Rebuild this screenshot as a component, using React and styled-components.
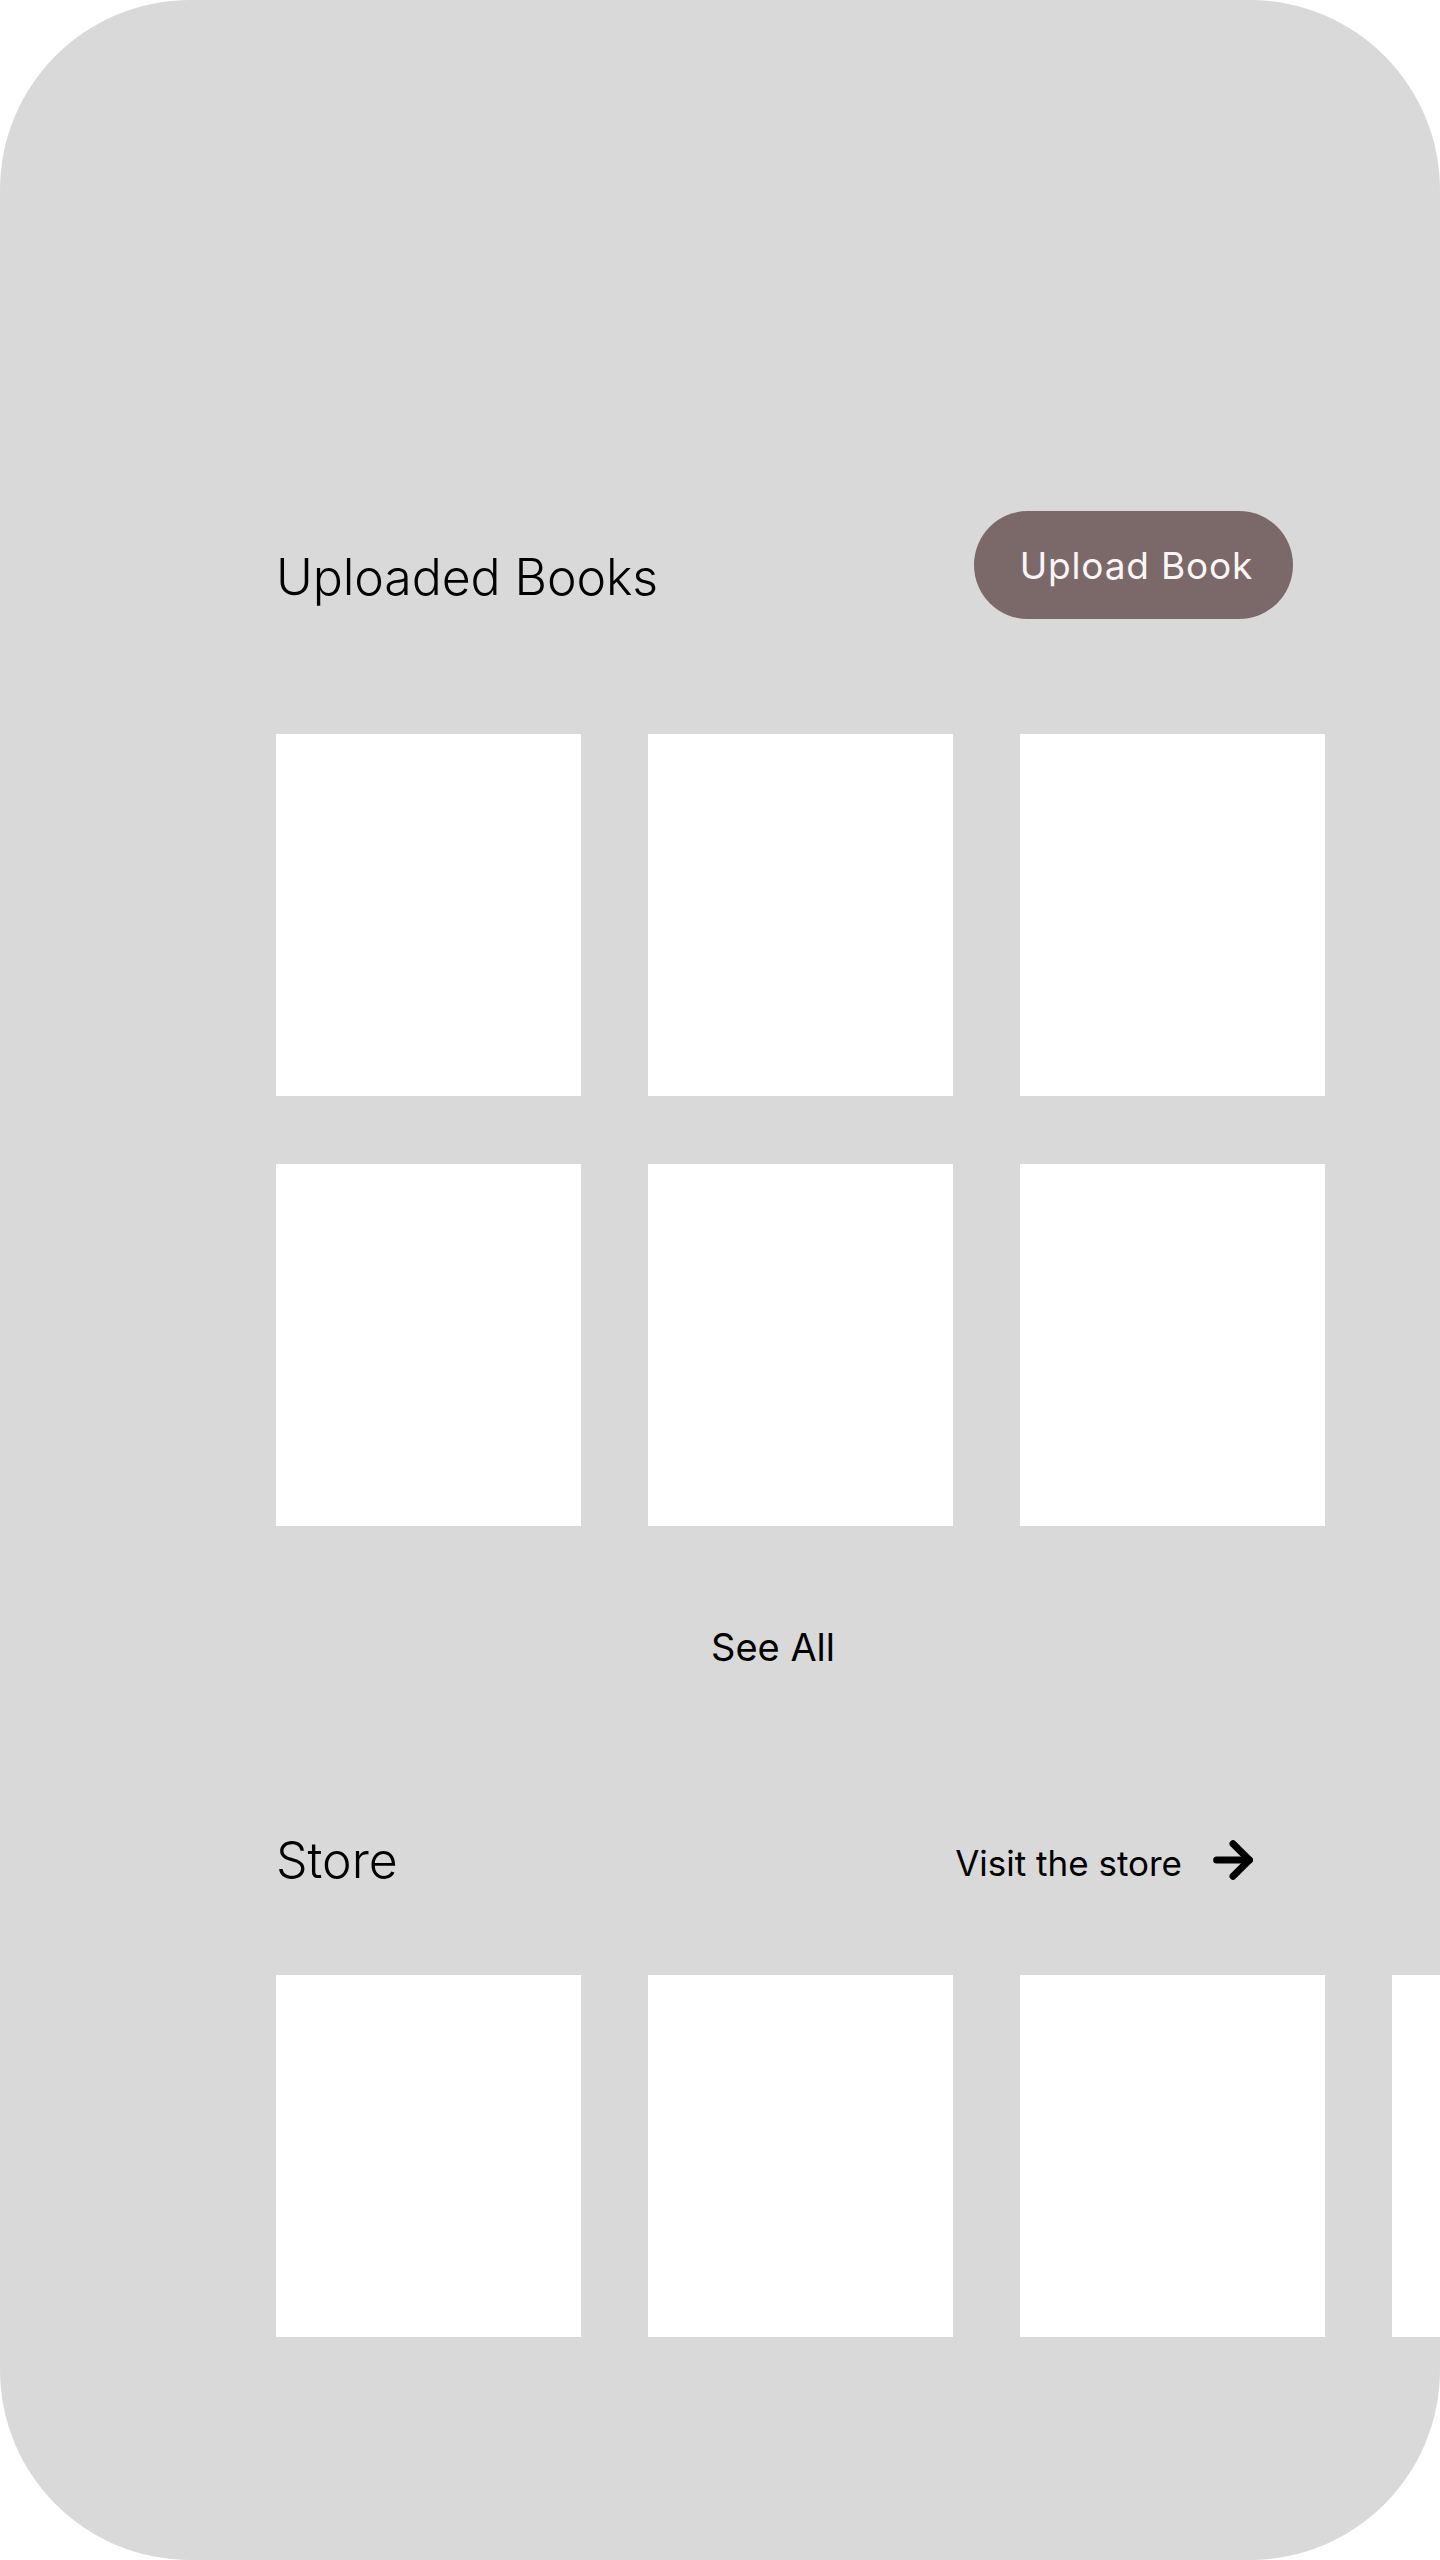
import React from "react";
import styled, { createGlobalStyle } from "styled-components";
import { ArrowRight } from "lucide-react";

const GlobalStyle = createGlobalStyle`
    body {
        margin: 0;
        background: #ffffff;
        font-family: Inter, "Noto Sans", sans-serif;
    }
`;

const Screen = styled.div`
    width: 1440px;
    height: 2560px;
    box-sizing: border-box;
    background-color: #d9d9d9;
    border-radius: 190px;
    overflow: hidden;
    padding: 511px 0 0 276px;
`;

const Content = styled.div`
    width: 1050px;
    display: flex;
    flex-direction: column;
`;

const SectionHeader = styled.div`
    display: flex;
    flex-direction: row;
    justify-content: space-between;
    align-items: center;
    padding-right: ${(p) => p.inset}px;
    margin-top: ${(p) => p.top || 0}px;
`;

const Title = styled.h2`
    margin: 0;
    margin-top: ${(p) => p.shift || 0}px;
    font-size: ${(p) => p.size}px;
    font-weight: 300;
    letter-spacing: ${(p) => p.track || 0}px;
    line-height: 1;
    color: #000;
`;

const UploadButton = styled.button`
    height: 108px;
    padding: 0 40px 0 46px;
    border: none;
    border-radius: 54px;
    background-color: #7b6969;
    color: #faf5f5;
    font-family: Inter, sans-serif;
    font-size: 37px;
    font-weight: 400;
    letter-spacing: 0.8px;
    line-height: 1;
    cursor: pointer;
`;

const BookGrid = styled.div`
    display: grid;
    grid-template-columns: repeat(3, 305px);
    grid-auto-rows: 362px;
    column-gap: 67px;
    row-gap: 68px;
    margin-top: 115px;
`;

const BookCard = styled.div`
    background-color: #ffffff;
`;

const SeeAllRow = styled.div`
    margin-top: 102px;
    padding-left: 435px;
`;

const SeeAll = styled.a`
    font-size: 38px;
    font-weight: 400;
    line-height: 1;
    color: #000;
    text-decoration: none;
    cursor: pointer;
`;

const StoreLink = styled.a`
    display: flex;
    align-items: center;
    gap: 23px;
    color: #000;
    text-decoration: none;
    cursor: pointer;
`;

const StoreLinkText = styled.span`
    font-size: 35px;
    font-weight: 400;
    line-height: 1;
    margin-top: 7px;
`;

const StoreRow = styled.div`
    display: flex;
    flex-direction: row;
    gap: 67px;
    margin-top: 87px;
`;

const StoreCard = styled(BookCard)`
    flex-shrink: 0;
    width: 305px;
    height: 362px;
`;

const uploaded = [1, 2, 3, 4, 5, 6];
const storeItems = [1, 2, 3, 4];

export default function App() {
    return (
        <>
            <GlobalStyle />
            <Screen>
                <Content>
                    <SectionHeader inset={33}>
                        <Title size={50} shift={24} track={-0.1}>Uploaded Books</Title>
                        <UploadButton>Upload Book</UploadButton>
                    </SectionHeader>

                    <BookGrid>
                        {uploaded.map((id) => (
                            <BookCard key={id} />
                        ))}
                    </BookGrid>

                    <SeeAllRow>
                        <SeeAll>See All</SeeAll>
                    </SeeAllRow>

                    <SectionHeader inset={65} top={166}>
                        <Title size={50}>Store</Title>
                        <StoreLink>
                            <StoreLinkText>Visit the store</StoreLinkText>
                            <ArrowRight size={56} strokeWidth={3} color="#000" />
                        </StoreLink>
                    </SectionHeader>

                    <StoreRow>
                        {storeItems.map((id) => (
                            <StoreCard key={id} />
                        ))}
                    </StoreRow>
                </Content>
            </Screen>
        </>
    );
}
